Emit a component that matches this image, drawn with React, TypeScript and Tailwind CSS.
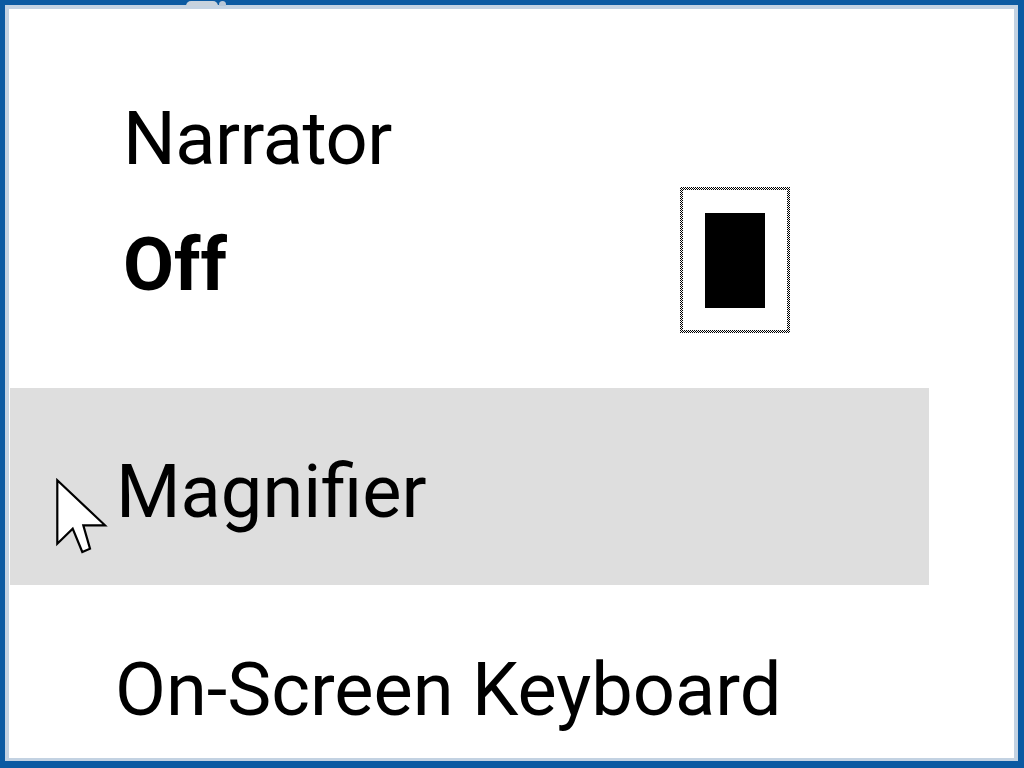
import React from "react";

export default function App() {
  return (
    <div
      className="relative w-[1024px] h-[768px] bg-[#0b5aa2] pt-[5px] pl-[5px] pr-[6px] pb-[7px] overflow-hidden"
      style={{ fontFamily: 'Roboto, "Noto Sans", sans-serif' }}
    >
      <div className="absolute left-[186px] top-[1px] w-[32px] h-[5px] rounded-t-full bg-[#c7d2dd]" />
      <div className="absolute left-[219px] top-[1px] w-[7px] h-[5px] rounded-t-full bg-[#b9c8d8]" />
      <div className="w-full h-full bg-[#c3d2e2] pt-[4px] pl-[4px] pr-[4px] pb-[3px]">
        <div className="w-full h-full bg-white flex flex-col text-black">
          <div className="pl-[114px] mt-[93px] h-[74px] text-[74px] leading-none tracking-[-0.5px]">Narrator</div>
          <div className="flex items-start pl-[114px] mt-[11px] h-[146px]">
            <div className="w-[557px] mt-[41px] text-[74px] font-bold leading-none">Off</div>
            <div className="w-[110px] h-[146px] p-[3px] bg-[repeating-conic-gradient(#000_0_25%,#fff_0_50%)] bg-[length:2px_2px]">
              <div className="w-full h-full bg-white flex items-center justify-center">
                <div className="w-[60px] h-[95px] bg-black" />
              </div>
            </div>
          </div>
          <div className="mt-[55px] ml-[1px] w-[919px] h-[197px] bg-[#dedede] relative">
            <svg className="absolute left-[45px] top-[90px]" width="56" height="80" viewBox="0 0 56 80">
              <path
                d="M2.3 2.3 L2.3 65.7 L17.7 50.7 L27.3 74 L35 70.7 L28.3 47.3 L50 47.3 Z"
                fill="#fff"
                stroke="#000"
                strokeWidth="2.2"
                strokeLinejoin="miter"
              />
            </svg>
            <div className="pl-[106px] pt-[67px] text-[74px] leading-none">Magnifier</div>
          </div>
          <div className="pl-[106px] mt-[68px] text-[74px] leading-none">On-Screen Keyboard</div>
        </div>
      </div>
    </div>
  );
}
